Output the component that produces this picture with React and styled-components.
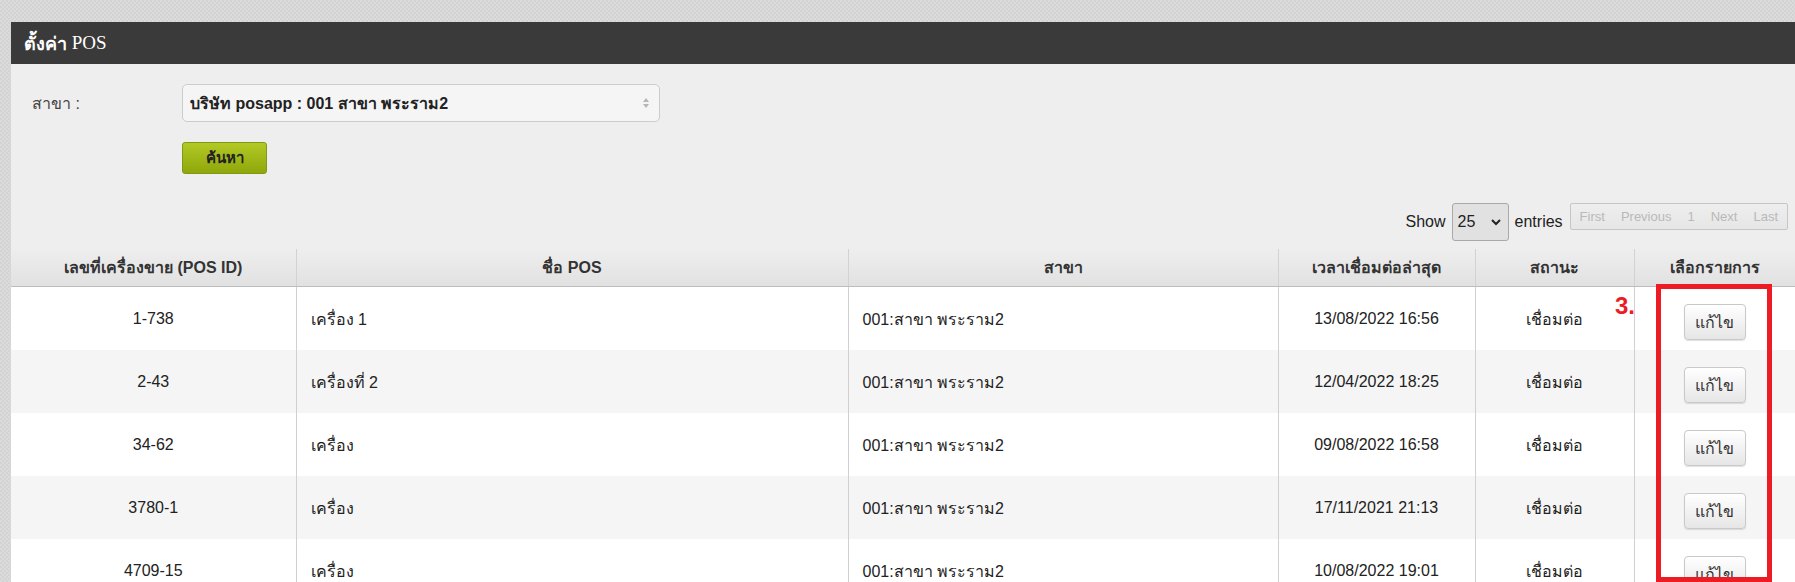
import React from "react";
import styled, { createGlobalStyle } from "styled-components";

const GlobalStyle = createGlobalStyle`
  html, body {
    margin: 0;
    padding: 0;
    overflow: hidden;
  }
  body {
    font-family: "Liberation Sans", Arial, "DejaVu Sans", sans-serif;
    background-color: #d7d7d7;
    background-image: repeating-conic-gradient(#d3d3d3 0% 25%, #dbdbdb 0% 50%);
    background-size: 4px 4px;
  }
`;

const posRows = [
  { id: "1-738", name: "เครื่อง 1", branch: "001:สาขา พระราม2", time: "13/08/2022 16:56" },
  { id: "2-43", name: "เครื่องที่ 2", branch: "001:สาขา พระราม2", time: "12/04/2022 18:25" },
  { id: "34-62", name: "เครื่อง", branch: "001:สาขา พระราม2", time: "09/08/2022 16:58" },
  { id: "3780-1", name: "เครื่อง", branch: "001:สาขา พระราม2", time: "17/11/2021 21:13" },
  { id: "4709-15", name: "เครื่อง", branch: "001:สาขา พระราม2", time: "10/08/2022 19:01" },
];

const columns = [
  { title: "เลขที่เครื่องขาย (POS ID)", width: 285 },
  { title: "ชื่อ POS", width: 552 },
  { title: "สาขา", width: 430 },
  { title: "เวลาเชื่อมต่อล่าสุด", width: 197 },
  { title: "สถานะ", width: 159 },
  { title: "เลือกรายการ" },
];

const pagerItems = ["First", "Previous", "1", "Next", "Last"];

const App = () => {
  return (
    <Page>
      <GlobalStyle />
      <Panel>
        <PanelHeader>
          <HeaderThai>ตั้งค่า</HeaderThai>&nbsp;POS
        </PanelHeader>
        <FormRow>
          <FieldLabel>สาขา :</FieldLabel>
          <BranchSelect>
            <span>บริษัท posapp : 001 สาขา พระราม2</span>
            <svg width="8" height="12" viewBox="0 0 8 12">
              <path d="M4 1 L7 5 H1 Z" fill="#b5b5b5" />
              <path d="M4 11 L7 7 H1 Z" fill="#b5b5b5" />
            </svg>
          </BranchSelect>
        </FormRow>
        <FormRow>
          <span />
          <SearchButton type="button">ค้นหา</SearchButton>
        </FormRow>

        <TableToolbar>
          <LengthLabel>
            Show
            <LengthSelect>
              <span>25</span>
              <svg width="12" height="8" viewBox="0 0 12 8">
                <path
                  d="M2 2 L6 6 L10 2"
                  fill="none"
                  stroke="#222"
                  strokeWidth="2"
                />
              </svg>
            </LengthSelect>
            entries
          </LengthLabel>
          <Pager>
            {pagerItems.map((item) => (
              <PagerItem key={item}>{item}</PagerItem>
            ))}
          </Pager>
        </TableToolbar>

        <PosTable>
          <colgroup>
            {columns.map((col, idx) => (
              <col key={idx} style={col.width ? { width: col.width } : undefined} />
            ))}
          </colgroup>
          <thead>
            <tr>
              {columns.map((col) => (
                <HeadCell key={col.title}>{col.title}</HeadCell>
              ))}
            </tr>
          </thead>
          <tbody>
            {posRows.map((row, idx) => (
              <BodyRow key={row.id} $striped={idx % 2 === 1}>
                <Cell $align="center">{row.id}</Cell>
                <Cell>{row.name}</Cell>
                <Cell>{row.branch}</Cell>
                <Cell $align="center">{row.time}</Cell>
                <Cell $align="center">เชื่อมต่อ</Cell>
                <Cell $align="center">
                  <EditButton type="button">แก้ไข</EditButton>
                </Cell>
              </BodyRow>
            ))}
          </tbody>
        </PosTable>
      </Panel>

      <StepNumber>3.</StepNumber>
      <HighlightBox />
    </Page>
  );
};

export default App;

const Page = styled.div`
  position: relative;
  height: 582px;
  padding: 22px 0 0 11px;
  box-sizing: border-box;
`;

const Panel = styled.section`
  background: #eeeeee;
  min-height: 560px;
`;

const PanelHeader = styled.h1`
  display: flex;
  align-items: center;
  height: 42px;
  margin: 0;
  padding-left: 13px;
  background: #3a3a3a;
  color: #ffffff;
  font-family: "Liberation Serif", "Times New Roman", serif;
  font-size: 19px;
  font-weight: 400;
`;

const HeaderThai = styled.span`
  font-family: "Liberation Sans", "DejaVu Sans", sans-serif;
  font-weight: 700;
  font-size: 18px;
`;

const FormRow = styled.div`
  display: grid;
  grid-template-columns: 150px 478px;
  align-items: center;
  padding-left: 21px;
  margin-top: 20px;
`;

const FieldLabel = styled.label`
  font-size: 16px;
  color: #444;
`;

const BranchSelect = styled.div`
  display: flex;
  align-items: center;
  justify-content: space-between;
  height: 38px;
  box-sizing: border-box;
  padding: 0 9px 0 7px;
  background: #f5f5f5;
  border: 1px solid #cccccc;
  border-radius: 5px;
  font-size: 16px;
  font-weight: 700;
  color: #222;
`;

const SearchButton = styled.button`
  width: 85px;
  height: 32px;
  padding: 0;
  background: linear-gradient(#b2c925, #8fa70b);
  border: 1px solid #7f9912;
  border-radius: 3px;
  font-family: "Liberation Sans", Arial, sans-serif;
  font-size: 15px;
  font-weight: 700;
  color: #222;
  cursor: pointer;
`;

const TableToolbar = styled.div`
  display: flex;
  justify-content: flex-end;
  align-items: flex-start;
  gap: 7px;
  margin-top: 29px;
  padding-right: 7px;
  height: 38px;
`;

const LengthLabel = styled.label`
  display: flex;
  align-items: center;
  gap: 6px;
  height: 38px;
  font-size: 16px;
  color: #222;
`;

const LengthSelect = styled.div`
  display: flex;
  align-items: center;
  justify-content: space-between;
  width: 57px;
  height: 38px;
  box-sizing: border-box;
  padding: 0 6px 0 5px;
  background: #e1e1e1;
  border: 1px solid #a9a9a9;
  border-radius: 3px;
  font-size: 16px;
`;

const Pager = styled.div`
  display: flex;
  align-items: center;
  gap: 16px;
  height: 27px;
  box-sizing: border-box;
  padding: 0 9px;
  border: 1px solid #c6c6c6;
  border-radius: 2px;
  background: linear-gradient(#eeeeee, #e6e6e6);
`;

const PagerItem = styled.span`
  font-size: 13px;
  color: #b9b9b9;
`;

const PosTable = styled.table`
  width: 100%;
  margin-top: 8px;
  border-collapse: collapse;
  table-layout: fixed;
`;

const HeadCell = styled.th`
  height: 37px;
  padding: 0;
  background: linear-gradient(#eeeeee, #e1e1e1);
  border-left: 1px solid #d2d2d2;
  border-bottom: 1px solid #bdbdbd;
  font-size: 16px;
  font-weight: 700;
  color: #333;
  text-align: center;

  &:first-child {
    border-left: none;
  }
`;

const BodyRow = styled.tr`
  background: ${(p) => (p.$striped ? "#f5f5f5" : "#ffffff")};
`;

const Cell = styled.td`
  height: 63px;
  padding: 2px 14px 0;
  box-sizing: border-box;
  border-left: 1px solid #d0d0d0;
  font-size: 16px;
  color: #222;
  text-align: ${(p) => p.$align || "left"};
  vertical-align: middle;

  &:first-child {
    border-left: none;
  }
`;

const EditButton = styled.button`
  width: 62px;
  height: 36px;
  margin-top: 6px;
  padding: 0;
  background: linear-gradient(#ffffff, #e6e6e6);
  border: 1px solid #c9c9c9;
  border-radius: 4px;
  box-shadow: 0 1px 1px rgba(0, 0, 0, 0.12);
  font-family: "Liberation Sans", Arial, sans-serif;
  font-size: 16px;
  color: #333;
  cursor: pointer;
`;

const StepNumber = styled.span`
  position: absolute;
  left: 1615px;
  top: 292px;
  font-size: 24px;
  font-weight: 700;
  color: #ed1c24;
`;

const HighlightBox = styled.div`
  position: absolute;
  left: 1656px;
  top: 284px;
  width: 116px;
  height: 298px;
  box-sizing: border-box;
  border: 5px solid #ed1c24;
`;
